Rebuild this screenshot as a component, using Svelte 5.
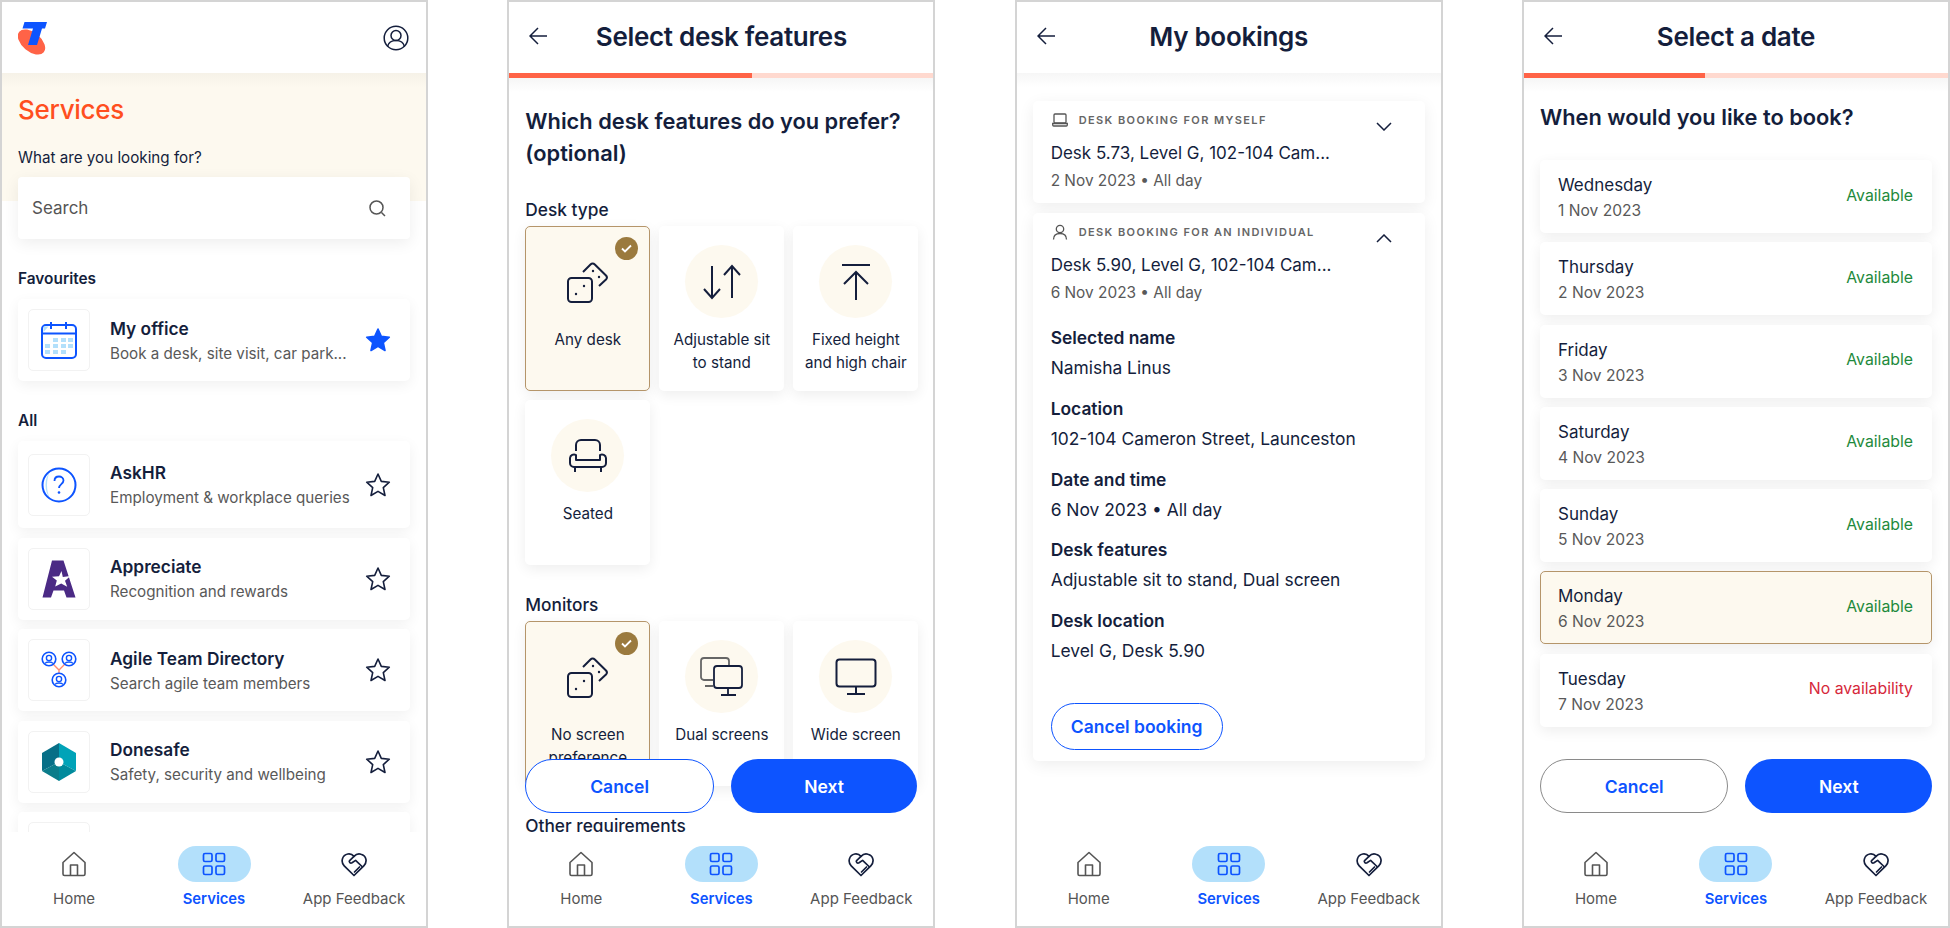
<script>
  const favourites = [
    { name: 'My office', sub: 'Book a desk, site visit, car park...', icon: 'calendar', fav: true }
  ];
  const services = [
    { name: 'AskHR', sub: 'Employment & workplace queries', icon: 'help', tall: true },
    { name: 'Appreciate', sub: 'Recognition and rewards', icon: 'appreciate' },
    { name: 'Agile Team Directory', sub: 'Search agile team members', icon: 'agile' },
    { name: 'Donesafe', sub: 'Safety, security and wellbeing', icon: 'donesafe' },
    { name: '', sub: '', icon: 'partial' }
  ];
  const deskTypes = [
    { label: 'Any desk', icon: 'dice', selected: true },
    { label: 'Adjustable sit to stand', icon: 'updown' },
    { label: 'Fixed height and high chair', icon: 'fixed' },
    { label: 'Seated', icon: 'sofa' }
  ];
  const monitors = [
    { label: 'No screen preference', icon: 'dice', selected: true },
    { label: 'Dual screens', icon: 'dual' },
    { label: 'Wide screen', icon: 'wide' }
  ];
  const details = [
    ['Selected name', 'Namisha Linus'],
    ['Location', '102-104 Cameron Street, Launceston'],
    ['Date and time', '6 Nov 2023 • All day'],
    ['Desk features', 'Adjustable sit to stand, Dual screen'],
    ['Desk location', 'Level G, Desk 5.90']
  ];
  const dates = [
    { day: 'Wednesday', date: '1 Nov 2023', ok: true },
    { day: 'Thursday', date: '2 Nov 2023', ok: true },
    { day: 'Friday', date: '3 Nov 2023', ok: true },
    { day: 'Saturday', date: '4 Nov 2023', ok: true },
    { day: 'Sunday', date: '5 Nov 2023', ok: true },
    { day: 'Monday', date: '6 Nov 2023', ok: true, selected: true },
    { day: 'Tuesday', date: '7 Nov 2023', ok: false }
  ];
</script>

{#snippet back()}
  <svg class="back" width="18" height="18" viewBox="0 0 18 18" fill="none" stroke="#141e3c" stroke-width="1.5">
    <path d="M18 9H1M9 1L1 9l8 8" />
  </svg>
{/snippet}

{#snippet star(filled)}
  <svg width="26" height="26" viewBox="0 0 26 26" fill={filled ? '#0d54ff' : 'none'} stroke={filled ? '#0d54ff' : '#141e3c'} stroke-width="1.6" stroke-linejoin="round">
    <path d="M13 2l3.3 7.4 8 .8-6 5.4 1.7 7.9-7-4.1-7 4.1 1.7-7.9-6-5.4 8-.8z" />
  </svg>
{/snippet}

{#snippet nav()}
  <nav class="nav">
    <div class="nav-item">
      <div class="nav-icon">
        <svg width="24" height="26" viewBox="0 0 24 26" fill="none" stroke="#555" stroke-width="1.6" stroke-linejoin="round">
          <path d="M1 11.5L12 1.5l11 10V23a1.5 1.5 0 0 1-1.5 1.5h-19A1.5 1.5 0 0 1 1 23z" />
          <path d="M8.5 24.5V14h7v10.5" />
        </svg>
      </div>
      <span>Home</span>
    </div>
    <div class="nav-item active">
      <div class="nav-icon pill">
        <svg width="24" height="24" viewBox="0 0 24 24" fill="none" stroke="#0d54ff" stroke-width="1.7">
          <rect x="1.5" y="1.5" width="8.5" height="8" rx="1.5" />
          <rect x="14" y="1.5" width="8.5" height="8" rx="1.5" />
          <rect x="1.5" y="14" width="8.5" height="8.5" rx="1.5" />
          <rect x="14" y="14" width="8.5" height="8.5" rx="1.5" />
        </svg>
      </div>
      <span>Services</span>
    </div>
    <div class="nav-item">
      <div class="nav-icon">
        <svg class="heart" width="26" height="25" viewBox="0 0 26 25" fill="none" stroke="#141e3c" stroke-width="1.7" stroke-linejoin="round" stroke-linecap="round">
          <path d="M13 23.5L3.2 13.8C-.5 10 1 3 6.8 2c2.400-.4 4.700.6 6.200 2.400 1.800-2 4.400-3 7-2.200 5.500 1.500 6.600 7.800 2.800 11.600z" />
          <path d="M13 4.400L8.600 8.600c-1 1.400.8 3.200 2.400 2.200l3.600-2.400 6.400 6.100M13.500 20l2.500-2.500M16 17.500l2.500-2.500" />
        </svg>
      </div>
      <span>App Feedback</span>
    </div>
  </nav>
{/snippet}

{#snippet serviceIcon(kind)}
  {#if kind === 'calendar'}
    <svg width="36" height="38" viewBox="0 0 36 38" fill="none">
      <rect x="1" y="4" width="34" height="33" rx="4" stroke="#0d54ff" stroke-width="2" />
      <path d="M1 12.500h34M10 1v7M25 1v7" stroke="#0d54ff" stroke-width="2" />
      <path d="M2.500 5.500h5l-5 5.500z" fill="#b3e0fb" />
      <g fill="#b3e0fb">
        <rect x="12" y="17" width="5" height="4" /><rect x="20" y="17" width="5" height="4" /><rect x="27" y="17" width="5" height="4" />
        <rect x="4" y="23" width="5" height="4" /><rect x="12" y="23" width="5" height="4" /><rect x="20" y="23" width="5" height="4" /><rect x="27" y="23" width="5" height="4" />
        <rect x="4" y="29" width="5" height="4" /><rect x="12" y="29" width="5" height="4" /><rect x="20" y="29" width="5" height="4" />
      </g>
    </svg>
  {:else if kind === 'help'}
    <svg width="36" height="36" viewBox="0 0 36 36" fill="none">
      <path d="M9 5C3 11 3 25 9 31 5 25 5 11 9 5z" fill="#b3e0fb" />
      <circle cx="18" cy="18" r="16.500" stroke="#0d54ff" stroke-width="2" />
      <path d="M13.500 14c0-3 2-4.500 4.500-4.500s4.500 1.700 4.500 4c0 3.500-4.500 3.700-4.500 7.500" stroke="#0d54ff" stroke-width="1.800" />
      <circle cx="18" cy="25.500" r="1.300" fill="#0d54ff" />
    </svg>
  {:else if kind === 'appreciate'}
    <svg width="34" height="38" viewBox="0 0 34 38">
      <path fill="#4b2a85" d="M10 .5h11.500L33.500 37.500H24.500L22 30.500H11.500L9 37.500H.5z" />
      <path fill="#fff" d="M19.500 11l1.300 6 7.700-1-5.500 4.800 2.200 6-6-3.300-6 3 1.600-6-4.800-3.800 7-.4z" />
    </svg>
  {:else if kind === 'agile'}
    <svg width="36" height="38" viewBox="0 0 36 38" fill="none" stroke="#0d54ff" stroke-width="1.400">
      <path d="M12 13l6 6 6-6M18 19v4" stroke="#ff8a70" />
      {#each [[8, 8], [28, 8], [18, 29]] as c}
        <circle cx={c[0]} cy={c[1]} r="6.800" stroke-width="1.600" />
        <circle cx={c[0]} cy={c[1] - 1} r="2.600" />
        <path d={`M${c[0] - 4} ${c[1] + 4.500}c1-2 7-2 8 0`} />
      {/each}
    </svg>
  {:else if kind === 'donesafe'}
    <svg width="34" height="38" viewBox="0 0 34 38">
      <path fill="#00a3b8" d="M17 0l17 10v18L17 19z" />
      <path fill="#008a9c" d="M34 28L17 38V19z" />
      <path fill="#0b7c8a" d="M17 38L0 28 17 19z" />
      <path fill="#076f87" d="M0 28V10L17 0v19z" />
      <circle cx="17" cy="19" r="4.500" fill="#fff" />
    </svg>
  {:else}
    <svg width="40" height="42" viewBox="0 0 40 42"><circle cx="20" cy="20" r="20" fill="#f5b75c" /></svg>
  {/if}
{/snippet}

{#snippet featureIcon(kind)}
  {#if kind === 'dice'}
    <svg width="42" height="42" viewBox="0 0 42 42" fill="none" stroke="#141e3c" stroke-width="2" stroke-linejoin="round">
      <rect x="1" y="17" width="24" height="24" rx="3.500" />
      <path d="M16 11l7.500-7.500c1.300-1.300 3-1.300 4.300 0L39 14.500c1.200 1.300 1.200 2.700 0 4L32 25" />
      <g fill="#141e3c" stroke="none">
        <circle cx="9" cy="33" r="1.200" /><circle cx="17" cy="25" r="1.200" /><circle cx="26" cy="10" r="1.200" /><circle cx="32" cy="16" r="1.200" />
      </g>
    </svg>
  {:else if kind === 'updown'}
    <svg width="40" height="36" viewBox="0 0 40 36" fill="none" stroke="#141e3c" stroke-width="2">
      <path d="M10 2v31M2 25l8 9 8-9M30 34V3M22 11l8-9 8 9" />
    </svg>
  {:else if kind === 'fixed'}
    <svg width="30" height="38" viewBox="0 0 30 38" fill="none" stroke="#141e3c" stroke-width="2">
      <path d="M1 2h28M15 37V10M3 21l12-12 12 12" />
    </svg>
  {:else if kind === 'sofa'}
    <svg width="38" height="34" viewBox="0 0 38 34" fill="none" stroke="#141e3c" stroke-width="2" stroke-linejoin="round">
      <path d="M7 12V6a5 5 0 0 1 5-5h14a5 5 0 0 1 5 5v6" />
      <path d="M7 21h24v-5a4 4 0 0 1 6 3v5a4 4 0 0 1-4 4H5a4 4 0 0 1-4-4v-5a4 4 0 0 1 6-3zM6 28v5M32 28v5" />
    </svg>
  {:else if kind === 'dual'}
    <svg width="44" height="40" viewBox="0 0 44 40" fill="none" stroke-width="1.800">
      <path d="M13 23H4a3 3 0 0 1-3-3V4a3 3 0 0 1 3-3h22a3 3 0 0 1 3 3v4M5 29h8" stroke="#666" />
      <rect x="14" y="9" width="28" height="22" rx="3" stroke="#141e3c" />
      <path d="M28 31v7M21 38h15" stroke="#141e3c" />
    </svg>
  {:else}
    <svg width="42" height="38" viewBox="0 0 42 38" fill="none" stroke="#141e3c" stroke-width="2">
      <rect x="1.500" y="1.500" width="39" height="27" rx="3" />
      <path d="M21 29v7M12 36h18" />
    </svg>
  {/if}
{/snippet}

{#snippet tiles(items)}
  <div class="tiles">
    {#each items as t}
      <div class="tile" class:selected={t.selected}>
        {#if t.selected}
          <span class="tick">
            <svg width="11" height="9" viewBox="0 0 11 9" fill="none" stroke="#fff" stroke-width="1.800"><path d="M1 4.500l3 3L10 1.500" /></svg>
          </span>
        {/if}
        <div class="tile-icon">{@render featureIcon(t.icon)}</div>
        <p>{t.label}</p>
      </div>
    {/each}
  </div>
{/snippet}

{#snippet serviceCard(s)}
  <div class="service" class:tall={s.tall}>
    <div class="service-icon">{@render serviceIcon(s.icon)}</div>
    <div class="service-text">
      <h3>{s.name}</h3>
      <p>{s.sub}</p>
    </div>
    <div class="service-star">{@render star(s.fav)}</div>
  </div>
{/snippet}

<div class="page">
  <!-- Services -->
  <section class="phone">
    <header class="header brand">
      <svg width="30" height="34" viewBox="0 0 30 34">
        <ellipse cx="13.500" cy="21" rx="16" ry="9.500" transform="rotate(40 13.500 21)" fill="#ff6347" />
        <path fill="#0d54ff" d="M6.500 1H29l-2 6.500h-3L19 24h-9l5-16.500H4.500z" />
      </svg>
      <svg width="26" height="26" viewBox="0 0 26 26" fill="none" stroke="#141e3c" stroke-width="1.500">
        <circle cx="13" cy="13" r="11.800" />
        <circle cx="13" cy="10.500" r="5" />
        <path d="M4.500 21.500c1-4 4.500-6 8.500-6s7.500 2 8.500 6" />
      </svg>
    </header>
    <div class="body">
      <div class="hero">
        <h1>Services</h1>
        <label for="search">What are you looking for?</label>
        <div class="search">
          <span id="search">Search</span>
          <svg width="17" height="17" viewBox="0 0 17 17" fill="none" stroke="#555" stroke-width="1.500">
            <circle cx="7.500" cy="7.500" r="6.500" /><path d="M12.500 12.500l3.500 3.500" />
          </svg>
        </div>
      </div>
      <h2 class="group first">Favourites</h2>
      <div class="services">
        {#each favourites as s}{@render serviceCard(s)}{/each}
      </div>
      <h2 class="group">All</h2>
      <div class="services">
        {#each services as s}{@render serviceCard(s)}{/each}
      </div>
    </div>
    {@render nav()}
  </section>

  <!-- Desk features -->
  <section class="phone">
    <header class="header">
      {@render back()}
      <h1 class="title">Select desk features</h1>
    </header>
    <div class="progress"><span style="width: 57.3%"></span></div>
    <div class="body pad features">
      <h2 class="question">Which desk features do you prefer? (optional)</h2>
      <h3 class="feature-label">Desk type</h3>
      {@render tiles(deskTypes)}
      <h3 class="feature-label">Monitors</h3>
      {@render tiles(monitors)}
      <h3 class="feature-label">Other requirements</h3>
      <div class="actions over">
        <button class="btn outline">Cancel</button>
        <button class="btn solid">Next</button>
      </div>
    </div>
    {@render nav()}
  </section>

  <!-- Bookings -->
  <section class="phone">
    <header class="header">
      {@render back()}
      <h1 class="title">My bookings</h1>
    </header>
    <div class="body pad bookings">
      <div class="booking">
        <svg class="chev" width="16" height="9" viewBox="0 0 16 9" fill="none" stroke="#141e3c" stroke-width="1.500"><path d="M1 1l7 7 7-7" /></svg>
        <div class="eyebrow">
          <svg width="16" height="14" viewBox="0 0 16 14" fill="none" stroke="#555" stroke-width="1.300">
            <rect x="2" y="1" width="12" height="9" rx="1" /><path d="M.7 10.500h14.600v1.500a1 1 0 0 1-1 1H1.700a1 1 0 0 1-1-1z" />
          </svg>
          <span>DESK BOOKING FOR MYSELF</span>
        </div>
        <p class="desk">Desk 5.73, Level G, 102-104 Cam...</p>
        <p class="when">2 Nov 2023 • All day</p>
      </div>
      <div class="booking open">
        <svg class="chev" width="16" height="9" viewBox="0 0 16 9" fill="none" stroke="#141e3c" stroke-width="1.500"><path d="M1 8l7-7 7 7" /></svg>
        <div class="eyebrow">
          <svg width="16" height="16" viewBox="0 0 16 16" fill="none" stroke="#555" stroke-width="1.300">
            <circle cx="8" cy="5" r="3.700" /><path d="M1.500 15.500c0-4 2.500-6 6.500-6s6.500 2 6.500 6" />
          </svg>
          <span>DESK BOOKING FOR AN INDIVIDUAL</span>
        </div>
        <p class="desk">Desk 5.90, Level G, 102-104 Cam...</p>
        <p class="when">6 Nov 2023 • All day</p>
        <dl>
          {#each details as d}
            <dt>{d[0]}</dt>
            <dd>{d[1]}</dd>
          {/each}
        </dl>
        <button class="btn outline small">Cancel booking</button>
      </div>
    </div>
    {@render nav()}
  </section>

  <!-- Date -->
  <section class="phone">
    <header class="header">
      {@render back()}
      <h1 class="title">Select a date</h1>
    </header>
    <div class="progress"><span style="width: 42.7%"></span></div>
    <div class="body pad dates">
      <h2 class="question">When would you like to book?</h2>
      <div class="date-list">
        {#each dates as d}
          <div class="date-row" class:selected={d.selected}>
            <div class="date-text">
              <p class="day">{d.day}</p>
              <p class="date">{d.date}</p>
            </div>
            <span class={d.ok ? 'avail' : 'none'}>{d.ok ? 'Available' : 'No availability'}</span>
          </div>
        {/each}
      </div>
      <div class="actions over">
        <button class="btn outline grey">Cancel</button>
        <button class="btn solid">Next</button>
      </div>
    </div>
    {@render nav()}
  </section>
</div>

<style>
  :global(body) {
    background: #fff;
    font-family: Inter, "Noto Sans", sans-serif;
    color: #141e3c;
  }

  h1, h2, h3, p, dl, dd, dt {
    margin: 0;
  }

  .page {
    display: flex;
    gap: 79.33px;
    width: 1950px;
    height: 928px;
    overflow: hidden;
  }

  .phone {
    position: relative;
    flex: none;
    display: flex;
    flex-direction: column;
    width: 428px;
    height: 928px;
    box-sizing: border-box;
    border: 2px solid #d4d4d4;
    background: #fff;
    overflow: hidden;
  }

  .header {
    position: relative;
    z-index: 2;
    flex: none;
    height: 71px;
    box-sizing: border-box;
    display: flex;
    align-items: center;
    padding: 0 18px 2px;
    background: #fff;
  }

  .brand {
    justify-content: space-between;
    padding: 0 17px 0 16px;
  }

  .back {
    position: absolute;
    left: 20px;
    top: 25px;
  }

  .title {
    width: 100%;
    text-align: center;
    font-size: 26px;
    line-height: 32px;
    font-weight: 600;
    letter-spacing: -0.3px;
  }

  .progress {
    position: relative;
    z-index: 2;
    flex: none;
    height: 5px;
    background: #ffd9cf;
  }

  .progress span {
    display: block;
    height: 100%;
    background: #ff6347;
  }

  .body {
    flex: 1;
    min-height: 0;
    overflow: hidden;
  }

  .pad {
    padding: 0 16px;
    background: linear-gradient(#f6f6f6, #fff 14px);
  }

  /* services screen */
  .hero {
    height: 128px;
    padding: 0 16px;
    box-sizing: border-box;
    background: linear-gradient(#f6f2e8, #fdf9ef 14px);
  }

  .hero h1 {
    padding-top: 21px;
    font-size: 26px;
    line-height: 32px;
    font-weight: 500;
    color: #ff4f1f;
    letter-spacing: -0.3px;
  }

  .hero label {
    display: block;
    margin-top: 21px;
    font-size: 15.200px;
    line-height: 22px;
  }

  .search {
    display: flex;
    align-items: center;
    justify-content: space-between;
    height: 62px;
    margin-top: 8px;
    padding: 0 24px 0 14px;
    background: #fff;
    border-radius: 4px;
    box-shadow: 0 4px 16px rgba(0, 0, 0, 0.07);
    font-size: 17px;
    color: #555;
  }

  .group {
    margin: 29px 16px 9px;
    font-size: 15.400px;
    line-height: 22px;
    font-weight: 600;
  }

  .group.first {
    margin-top: 67px;
  }

  .services {
    display: flex;
    flex-direction: column;
    gap: 9.500px;
    margin: 0 16px;
  }

  .service {
    display: flex;
    align-items: center;
    flex: none;
    height: 82px;
    box-sizing: border-box;
    padding: 0 19px 0 10px;
    background: #fff;
    border-radius: 5px;
    box-shadow: 0 4px 14px rgba(0, 0, 0, 0.06);
  }

  .service.tall {
    height: 87px;
  }

  .service-icon {
    flex: none;
    display: flex;
    align-items: center;
    justify-content: center;
    width: 62px;
    height: 62px;
    box-sizing: border-box;
    border: 1px solid #f2f2f2;
    border-radius: 5px;
    overflow: hidden;
  }

  .service-text {
    flex: 1;
    min-width: 0;
    margin-left: 20px;
    padding-top: 2px;
  }

  .service-text h3 {
    font-size: 17.300px;
    line-height: 24px;
    font-weight: 600;
  }

  .service-text p {
    font-size: 15.200px;
    line-height: 25px;
    color: #595959;
  }

  .service-star {
    flex: none;
    width: 26px;
    height: 26px;
  }

  /* feature screen */
  .question {
    font-size: 21.800px;
    line-height: 32px;
    font-weight: 600;
  }

  .features .question {
    padding: 27px 0 1px;
  }

  .feature-label {
    margin-top: 29px;
    font-size: 17.300px;
    line-height: 22px;
    font-weight: 500;
  }

  .tiles {
    display: grid;
    grid-template-columns: repeat(3, 125px);
    gap: 9px;
    margin-top: 5px;
  }

  .tile {
    position: relative;
    height: 165px;
    box-sizing: border-box;
    padding-top: 19px;
    text-align: center;
    background: #fff;
    border-radius: 5px;
    box-shadow: 0 4px 14px rgba(0, 0, 0, 0.07);
  }

  .tile.selected {
    padding-top: 18px;
    background: #fdf9ef;
    border: 1px solid #b5956a;
  }

  .tick {
    position: absolute;
    top: 10px;
    right: 11px;
    display: flex;
    align-items: center;
    justify-content: center;
    width: 23px;
    height: 23px;
    border-radius: 50%;
    background: #9b7a3e;
  }

  .tile-icon {
    display: flex;
    align-items: center;
    justify-content: center;
    width: 73px;
    height: 73px;
    margin: 0 auto;
    border-radius: 50%;
    background: #fdf9ef;
  }

  .tile p {
    margin-top: 10px;
    padding: 0 10px;
    font-size: 15.200px;
    line-height: 23px;
  }

  .actions {
    display: flex;
    gap: 17px;
  }

  .over {
    position: absolute;
    left: 16px;
    right: 16px;
    top: 757px;
    z-index: 1;
  }

  .btn {
    flex: 1;
    height: 54px;
    box-sizing: border-box;
    border-radius: 27px;
    font-family: inherit;
    font-size: 17.500px;
    font-weight: 600;
  }

  .outline {
    background: #fff;
    border: 1.500px solid #0d54ff;
    color: #0d54ff;
  }

  .outline.grey {
    border-color: #8a8a8a;
  }

  .outline.small {
    display: block;
    width: 172px;
    height: 47px;
    margin-top: 40px;
    border-radius: 24px;
  }

  .solid {
    background: #0d54ff;
    border: none;
    color: #fff;
  }

  /* bookings */
  .bookings {
    padding-top: 28px;
    display: flex;
    flex-direction: column;
    gap: 10px;
  }

  .booking {
    position: relative;
    flex: none;
    height: 102px;
    box-sizing: border-box;
    padding: 9px 18px 0;
    background: #fff;
    border-radius: 5px;
    box-shadow: 0 4px 16px rgba(0, 0, 0, 0.07);
  }

  .booking.open {
    height: 548px;
  }

  .chev {
    position: absolute;
    top: 21px;
    right: 33px;
  }

  .eyebrow {
    display: flex;
    align-items: center;
    gap: 11px;
    height: 20px;
    padding-left: 1px;
    font-size: 11px;
    font-weight: 600;
    letter-spacing: 1.400px;
    color: #666;
  }

  .desk {
    margin-top: 11px;
    font-size: 17px;
    line-height: 24px;
  }

  .when {
    margin-top: 4px;
    font-size: 15.400px;
    line-height: 24px;
    color: #595959;
  }

  dl {
    margin-top: 21px;
  }

  dt {
    font-size: 17.400px;
    line-height: 24px;
    font-weight: 600;
  }

  dd {
    margin: 6px 0 16.750px;
    font-size: 17.400px;
    line-height: 24px;
  }

  /* dates */
  .dates .question {
    padding-top: 23px;
  }

  .date-list {
    display: flex;
    flex-direction: column;
    gap: 9.300px;
    margin-top: 27px;
  }

  .date-row {
    display: flex;
    align-items: center;
    justify-content: space-between;
    height: 73px;
    box-sizing: border-box;
    padding: 0 19px 0 18px;
    background: #fff;
    border-radius: 5px;
    box-shadow: 0 4px 14px rgba(0, 0, 0, 0.07);
  }

  .date-row.selected {
    background: #fdf9ef;
    border: 1px solid #b5956a;
    padding: 0 18px 0 17px;
  }

  .date-text {
    padding-top: 2px;
  }

  .day {
    font-size: 17px;
    line-height: 26px;
  }

  .date {
    font-size: 15.600px;
    line-height: 25px;
    color: #595959;
  }

  .avail, .none {
    font-size: 15.800px;
    margin-bottom: 3px;
  }

  .avail {
    color: #1e8a3c;
  }

  .none {
    color: #d6283a;
  }

  /* bottom nav */
  .nav {
    position: relative;
    z-index: 2;
    flex: none;
    height: 94px;
    box-sizing: border-box;
    display: grid;
    grid-template-columns: repeat(3, 1fr);
    padding: 14px 2px 0;
    background: #fff;
  }

  .nav-item {
    display: flex;
    flex-direction: column;
    align-items: center;
    font-size: 15px;
    line-height: 22px;
    color: #555;
  }

  .nav-item.active {
    color: #0d54ff;
    font-weight: 600;
    font-size: 14.800px;
  }

  .nav-icon {
    display: flex;
    align-items: center;
    justify-content: center;
    width: 73px;
    height: 36px;
    margin-bottom: 6px;
  }

  .pill {
    border-radius: 18px;
    background: #b3e0fb;
  }
</style>
